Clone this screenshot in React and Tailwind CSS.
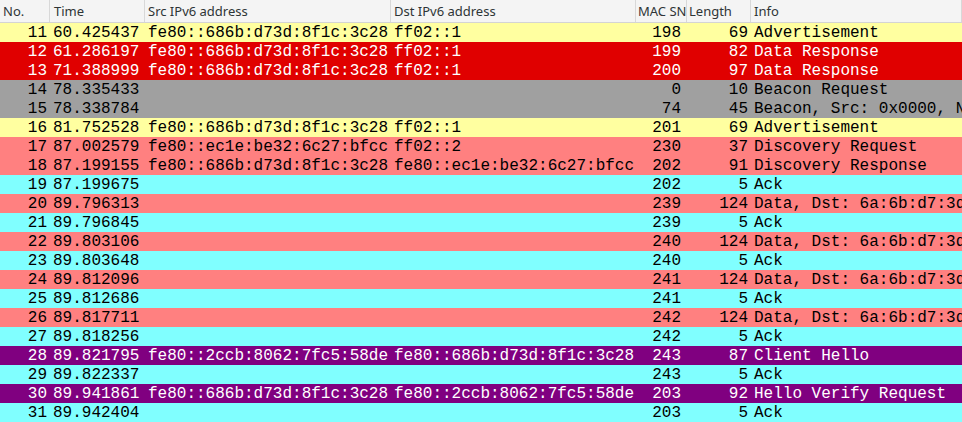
import React from 'react';

const SRC_A = 'fe80::686b:d73d:8f1c:3c28';
const SRC_B = 'fe80::ec1e:be32:6c27:bfcc';
const SRC_C = 'fe80::2ccb:8062:7fc5:58de';
const DATA_DST = 'Data, Dst: 6a:6b:d7:3d:8f:1c:3c:28';

const rowStyles = {
    yellow: 'bg-[#ffffa0] text-black',
    red: 'bg-[#e00000] text-white',
    gray: 'bg-[#a0a0a0] text-black',
    salmon: 'bg-[#ff8080] text-black',
    cyan: 'bg-[#80ffff] text-black',
    purple: 'bg-[#800080] text-white',
};

const packets = [
    [11, '60.425437', SRC_A, 'ff02::1', 198, 69, 'Advertisement', 'yellow'],
    [12, '61.286197', SRC_A, 'ff02::1', 199, 82, 'Data Response', 'red'],
    [13, '71.388999', SRC_A, 'ff02::1', 200, 97, 'Data Response', 'red'],
    [14, '78.335433', '', '', 0, 10, 'Beacon Request', 'gray'],
    [15, '78.338784', '', '', 74, 45, 'Beacon, Src: 0x0000, NWK: OpenThread', 'gray'],
    [16, '81.752528', SRC_A, 'ff02::1', 201, 69, 'Advertisement', 'yellow'],
    [17, '87.002579', SRC_B, 'ff02::2', 230, 37, 'Discovery Request', 'salmon'],
    [18, '87.199155', SRC_A, SRC_B, 202, 91, 'Discovery Response', 'salmon'],
    [19, '87.199675', '', '', 202, 5, 'Ack', 'cyan'],
    [20, '89.796313', '', '', 239, 124, DATA_DST, 'salmon'],
    [21, '89.796845', '', '', 239, 5, 'Ack', 'cyan'],
    [22, '89.803106', '', '', 240, 124, DATA_DST, 'salmon'],
    [23, '89.803648', '', '', 240, 5, 'Ack', 'cyan'],
    [24, '89.812096', '', '', 241, 124, DATA_DST, 'salmon'],
    [25, '89.812686', '', '', 241, 5, 'Ack', 'cyan'],
    [26, '89.817711', '', '', 242, 124, DATA_DST, 'salmon'],
    [27, '89.818256', '', '', 242, 5, 'Ack', 'cyan'],
    [28, '89.821795', SRC_C, SRC_A, 243, 87, 'Client Hello', 'purple'],
    [29, '89.822337', '', '', 243, 5, 'Ack', 'cyan'],
    [30, '89.941861', SRC_A, SRC_C, 203, 92, 'Hello Verify Request', 'purple'],
    [31, '89.942404', '', '', 203, 5, 'Ack', 'cyan'],
];

// header padding (pad) and cell padding (cell) differ a bit per column
const columns = [
    { label: 'No.', width: 'w-[50px]', align: 'text-right', pad: 'pl-[3px]', cell: 'px-[3px]' },
    { label: 'Time', width: 'w-[95px]', align: 'text-left', pad: 'pl-[4px]', cell: 'px-[3px]' },
    { label: 'Src IPv6 address', width: 'w-[246px]', align: 'text-left', pad: 'pl-[3px]', cell: 'px-[3px]' },
    { label: 'Dst IPv6 address', width: 'w-[245px]', align: 'text-left', pad: 'pl-[3px]', cell: 'px-[3px]' },
    { label: 'MAC SN', width: 'w-[51px]', align: 'text-right', pad: 'pl-[2px]', cell: 'pl-[3px] pr-[6px]' },
    { label: 'Length', width: 'w-[64px]', align: 'text-right', pad: 'pl-[2px]', cell: 'px-[3px]' },
    { label: 'Info', width: 'flex-1', align: 'text-left', pad: 'pl-[3px]', cell: 'px-[3px]' },
];

const PacketList = () => {
    return (
        <div className="w-[962px] h-[422px] overflow-hidden bg-white">
            <div className="flex h-[23px] bg-[#f4f4f4] border-b border-[#d4d4d4] text-[13px] text-[#2e3436] font-['Noto_Sans',sans-serif]">
                {columns.map((col) => (
                    <div
                        key={col.label}
                        className={`${col.width} ${col.pad} shrink-0 leading-[22px] border-r border-[#d8d8d8] whitespace-nowrap`}
                    >
                        {col.label}
                    </div>
                ))}
            </div>

            <div className="font-['Liberation_Mono',monospace] text-[16px] leading-[19px]">
                {packets.map((p) => (
                    <div key={p[0]} className={`flex h-[19px] pt-[1px] ${rowStyles[p[7]]}`}>
                        {p.slice(0, 7).map((value, i) => (
                            <div
                                key={i}
                                className={`${columns[i].width} ${columns[i].align} ${columns[i].cell} shrink-0 leading-[18px] whitespace-nowrap overflow-hidden`}
                            >
                                {value}
                            </div>
                        ))}
                    </div>
                ))}
            </div>
        </div>
    );
};

export default function App() {
    return <PacketList />;
}
